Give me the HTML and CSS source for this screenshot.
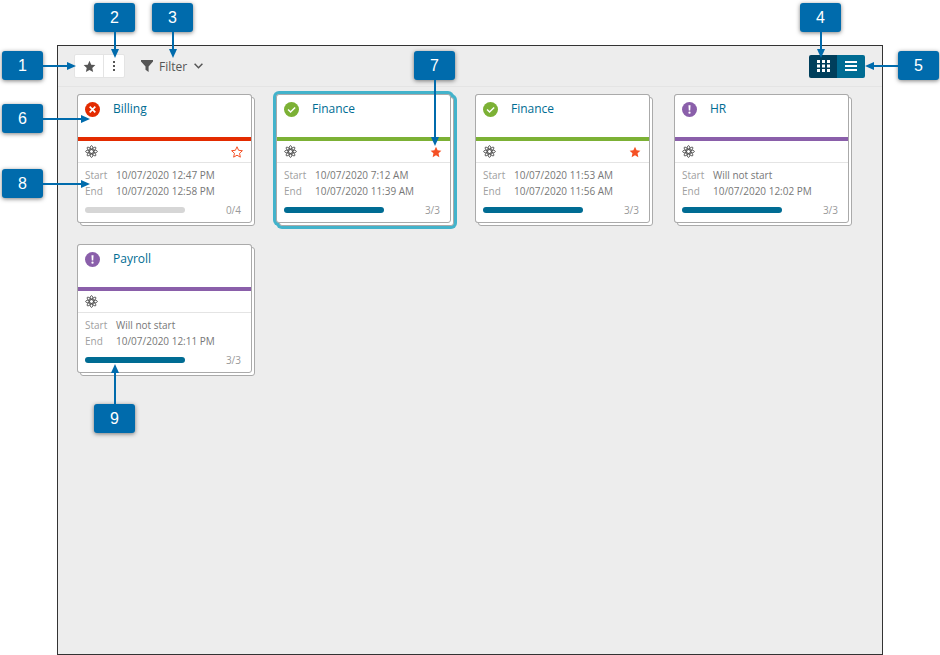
FILE: index.html
```html
<!DOCTYPE html>
<html lang="en">
<head>
	<meta charset="UTF-8">
	<title>Process overview</title>
	<link rel="stylesheet" href="styles.css">
</head>
<body>
	<!-- shared icons -->
	<svg class="sprite" aria-hidden="true">
		<symbol id="star" viewBox="0 0 24 24">
			<path d="M12 1.5l3.2 7.1 7.6.8-5.7 5.2 1.6 7.7L12 18.4l-6.7 3.9 1.6-7.7-5.7-5.2 7.6-.8z"/>
		</symbol>
		<symbol id="atom" viewBox="0 0 24 24">
			<g fill="none" stroke="currentColor" stroke-width="1.5">
				<ellipse cx="12" cy="12" rx="3.2" ry="11"/>
				<ellipse cx="12" cy="12" rx="3.2" ry="11" transform="rotate(45 12 12)"/>
				<ellipse cx="12" cy="12" rx="3.2" ry="11" transform="rotate(90 12 12)"/>
				<ellipse cx="12" cy="12" rx="3.2" ry="11" transform="rotate(135 12 12)"/>
			</g>
			<circle cx="12" cy="12" r="2.4" fill="#fff"/>
		</symbol>
		<symbol id="failed" viewBox="0 0 16 16">
			<circle cx="8" cy="8" r="8" fill="#e32b00"/>
			<path d="M5 5l6 6M11 5l-6 6" stroke="#fff" stroke-width="1.8"/>
		</symbol>
		<symbol id="done" viewBox="0 0 16 16">
			<circle cx="8" cy="8" r="8" fill="#7cb135"/>
			<path d="M4.3 8l2.7 2.6 4.9-4.8" fill="none" stroke="#fff" stroke-width="1.6"/>
		</symbol>
		<symbol id="warning" viewBox="0 0 16 16">
			<circle cx="8" cy="8" r="8" fill="#8a5faa"/>
			<path d="M6.9 3.5h2.2L8.800 9H7.200z" fill="#fff"/>
			<circle cx="8" cy="11.400" r="1.200" fill="#fff"/>
		</symbol>
	</svg>

	<main class="panel">
		<div class="toolbar">
			<div class="group">
				<button class="tool" aria-label="Favorites"><svg class="tool-star"><use href="#star"/></svg></button>
				<button class="tool tool-more" aria-label="More">
					<svg width="4" height="12" viewBox="0 0 4 12" fill="#555"><path d="M1 1h2v2H1zM1 5h2v2H1zM1 9h2v2H1z"/></svg>
				</button>
			</div>
			<button class="filter">
				<svg width="12" height="12" viewBox="0 0 12 12" fill="#555"><path d="M0 0h12v1.5L7.6 6.5V12L4.500 9.800V6.500L0 1.500z"/></svg>
				Filter
				<svg width="9" height="6" viewBox="0 0 9 6" fill="none" stroke="#555" stroke-width="1.5"><path d="M.6.8l3.9 3.9L8.400.8"/></svg>
			</button>
			<div class="views">
				<button class="view active" aria-label="Card view">
					<svg width="13" height="12" viewBox="0 0 13 12" fill="#fff"><path d="M0 0h3v3H0zM5 0h3v3H5zM10 0h3v3h-3zM0 4.500h3v3H0zM5 4.500h3v3H5zM10 4.500h3v3h-3zM0 9h3v3H0zM5 9h3v3H5zM10 9h3v3h-3z"/></svg>
				</button>
				<button class="view" aria-label="List view">
					<svg width="12" height="10" viewBox="0 0 12 10" fill="#fff"><path d="M0 0h12v2H0zM0 4h12v2H0zM0 8h12v2H0z"/></svg>
				</button>
			</div>
		</div>

		<div class="cards">
			<article class="card">
				<div class="front failed">
					<div class="head"><svg class="status"><use href="#failed"/></svg><a href="#">Billing</a></div>
					<div class="marks"><svg class="atom"><use href="#atom"/></svg><svg class="fav empty"><use href="#star"/></svg></div>
					<div class="info">
						<dl><dt>Start</dt><dd>10/07/2020 12:47 PM</dd><dt>End</dt><dd>10/07/2020 12:58 PM</dd></dl>
						<div class="progress"><span class="bar none"></span><span>0/4</span></div>
					</div>
				</div>
			</article>
			<article class="card selected">
				<div class="front done">
					<div class="head"><svg class="status"><use href="#done"/></svg><a href="#">Finance</a></div>
					<div class="marks"><svg class="atom"><use href="#atom"/></svg><svg class="fav"><use href="#star"/></svg></div>
					<div class="info">
						<dl><dt>Start</dt><dd>10/07/2020 7:12 AM</dd><dt>End</dt><dd>10/07/2020 11:39 AM</dd></dl>
						<div class="progress"><span class="bar"></span><span>3/3</span></div>
					</div>
				</div>
			</article>
			<article class="card">
				<div class="front done">
					<div class="head"><svg class="status"><use href="#done"/></svg><a href="#">Finance</a></div>
					<div class="marks"><svg class="atom"><use href="#atom"/></svg><svg class="fav"><use href="#star"/></svg></div>
					<div class="info">
						<dl><dt>Start</dt><dd>10/07/2020 11:53 AM</dd><dt>End</dt><dd>10/07/2020 11:56 AM</dd></dl>
						<div class="progress"><span class="bar"></span><span>3/3</span></div>
					</div>
				</div>
			</article>
			<article class="card">
				<div class="front warning">
					<div class="head"><svg class="status"><use href="#warning"/></svg><a href="#">HR</a></div>
					<div class="marks"><svg class="atom"><use href="#atom"/></svg></div>
					<div class="info">
						<dl><dt>Start</dt><dd>Will not start</dd><dt>End</dt><dd>10/07/2020 12:02 PM</dd></dl>
						<div class="progress"><span class="bar"></span><span>3/3</span></div>
					</div>
				</div>
			</article>
			<article class="card">
				<div class="front warning">
					<div class="head"><svg class="status"><use href="#warning"/></svg><a href="#">Payroll</a></div>
					<div class="marks"><svg class="atom"><use href="#atom"/></svg></div>
					<div class="info">
						<dl><dt>Start</dt><dd>Will not start</dd><dt>End</dt><dd>10/07/2020 12:11 PM</dd></dl>
						<div class="progress"><span class="bar"></span><span>3/3</span></div>
					</div>
				</div>
			</article>
		</div>
	</main>

	<!-- numbered callouts lying over the panel -->
	<span class="callout right c1">1</span>
	<span class="callout down c2">2</span>
	<span class="callout down c3">3</span>
	<span class="callout down c4">4</span>
	<span class="callout left c5">5</span>
	<span class="callout right c6">6</span>
	<span class="callout down c7">7</span>
	<span class="callout right c8">8</span>
	<span class="callout up c9">9</span>
</body>
</html>
```

FILE: styles.css
```css
* {
	box-sizing: border-box;
}
body {
	margin: 0;
	padding: 45px 57px 0;
	min-height: 100vh;
	display: flex;
	position: relative;
	background: #fff;
	font-family: "Open Sans", "Noto Sans", sans-serif;
	font-size: 10px;
	color: #777;
}
button {
	margin: 0;
	padding: 0;
	border: none;
	background: none;
	font: inherit;
	color: inherit;
	display: flex;
	align-items: center;
	justify-content: center;
}
svg {
	display: block;
}
.sprite {
	position: absolute;
	width: 0;
	height: 0;
}
.panel {
	flex: 1;
	border: 1px solid #333;
	background: #ededed;
}

/* toolbar */
.toolbar {
	display: flex;
	align-items: center;
	height: 41px;
	padding: 0 17px 0 16px;
	border-bottom: 1px solid #e4e4e4;
}
.group {
	display: flex;
	border: 1px solid #e4e4e4;
	border-radius: 2px;
	background: #fff;
}
.tool {
	width: 28px;
	height: 22px;
}
.tool-more {
	width: 21px;
	border-left: 1px solid #e4e4e4;
}
.tool-star {
	width: 13px;
	height: 13px;
	fill: #555;
}
.filter {
	margin-left: 16px;
	gap: 6px;
	font-size: 12px;
	color: #555;
}
.filter svg:last-child {
	margin-left: 1px;
}
.views {
	display: flex;
	margin-left: auto;
	border-radius: 2px;
	overflow: hidden;
}
.view {
	width: 28px;
	height: 23px;
	background: #006c93;
}
.view.active {
	background: #003f5c;
}

/* cards */
.cards {
	display: grid;
	grid-template-columns: repeat(auto-fill, 175px);
	gap: 21px 24px;
	padding: 7px 19px;
}
.card {
	position: relative;
	z-index: 0;
}
.front, .card::before, .card::after {
	border: 1px solid #aaa;
	border-radius: 3px;
	background: #fff;
}
/* second sheet under the card */
.card::before, .card::after {
	content: "";
	position: absolute;
	inset: 3px -3px -3px 3px;
	z-index: -1;
}
.card::after {
	inset: 0;
	z-index: -2;
}
.selected::before, .selected::after {
	box-shadow: 0 0 0 3px #43b3cb;
}
.head {
	display: flex;
	gap: 13px;
	height: 46px;
	padding: 5px 7px;
	border-bottom: 4px solid;
}
.failed .head {
	border-color: #e32b00;
}
.done .head {
	border-color: #7cb135;
}
.warning .head {
	border-color: #8a5faa;
}
.head a {
	font-size: 12px;
	line-height: 17px;
	color: #006c93;
	text-decoration: none;
}
.status {
	width: 15px;
	height: 15px;
	margin-top: 2px;
}
.marks {
	display: flex;
	align-items: center;
	justify-content: space-between;
	height: 22px;
	padding: 0 8px 0 7px;
	border-bottom: 1px solid #e4e4e4;
}
.atom {
	width: 13px;
	height: 13px;
	color: #444;
}
.fav {
	width: 12px;
	height: 12px;
	fill: #f55125;
}
.fav.empty {
	fill: none;
	stroke: #f55125;
	stroke-width: 2px;
}
.info {
	padding: 4px 10px 5px 7px;
}
dl {
	display: grid;
	grid-template-columns: 31px 1fr;
	margin: 0;
	line-height: 16px;
}
dt {
	color: #a0a0a0;
}
dd {
	margin: 0;
}
.progress {
	display: flex;
	align-items: center;
	justify-content: space-between;
	margin-top: 4px;
	line-height: 14px;
	color: #999;
}
.bar {
	width: 100px;
	height: 6px;
	border-radius: 3px;
	background: #006c93;
}
.bar.none {
	background: #d6d6d6;
}

/* callouts: --len is the arrow length */
.callout {
	position: absolute;
	width: 41px;
	height: 29px;
	border-radius: 3px;
	background: #006bac;
	box-shadow: 0 1px 4px rgba(0, 0, 0, 0.5);
	color: #fff;
	font: 16px/29px "Liberation Sans", Arial, sans-serif;
	text-align: center;
}
.callout::before, .callout::after {
	content: "";
	position: absolute;
	background: #006bac;
}
.right::before, .left::before {
	top: 14px;
	width: calc(var(--len) - 5px);
	height: 2px;
}
.right::after, .left::after {
	top: 11px;
	width: 9px;
	height: 8px;
}
.up::before, .down::before {
	left: 20px;
	width: 2px;
	height: calc(var(--len) - 5px);
}
.up::after, .down::after {
	left: 17px;
	width: 8px;
	height: 9px;
}
.right::before {
	left: 100%;
}
.right::after {
	right: calc(0px - var(--len));
	clip-path: polygon(0 0, 100% 50%, 0 100%);
}
.left::before {
	right: 100%;
}
.left::after {
	left: calc(0px - var(--len));
	clip-path: polygon(100% 0, 0 50%, 100% 100%);
}
.down::before {
	top: 100%;
}
.down::after {
	bottom: calc(0px - var(--len));
	clip-path: polygon(0 0, 100% 0, 50% 100%);
}
.up::before {
	bottom: 100%;
}
.up::after {
	top: calc(0px - var(--len));
	clip-path: polygon(50% 0, 100% 100%, 0 100%);
}
.c1 { left: 2px; top: 51px; --len: 33px; }
.c2 { left: 94px; top: 3px; --len: 26px; }
.c3 { left: 152px; top: 3px; --len: 26px; }
.c4 { left: 800px; top: 3px; --len: 26px; }
.c5 { left: 898px; top: 51px; --len: 33px; }
.c6 { left: 2px; top: 104px; --len: 47px; }
.c7 { left: 414px; top: 51px; --len: 66px; }
.c8 { left: 2px; top: 169px; --len: 47px; }
.c9 { left: 94px; top: 404px; --len: 40px; }
```
